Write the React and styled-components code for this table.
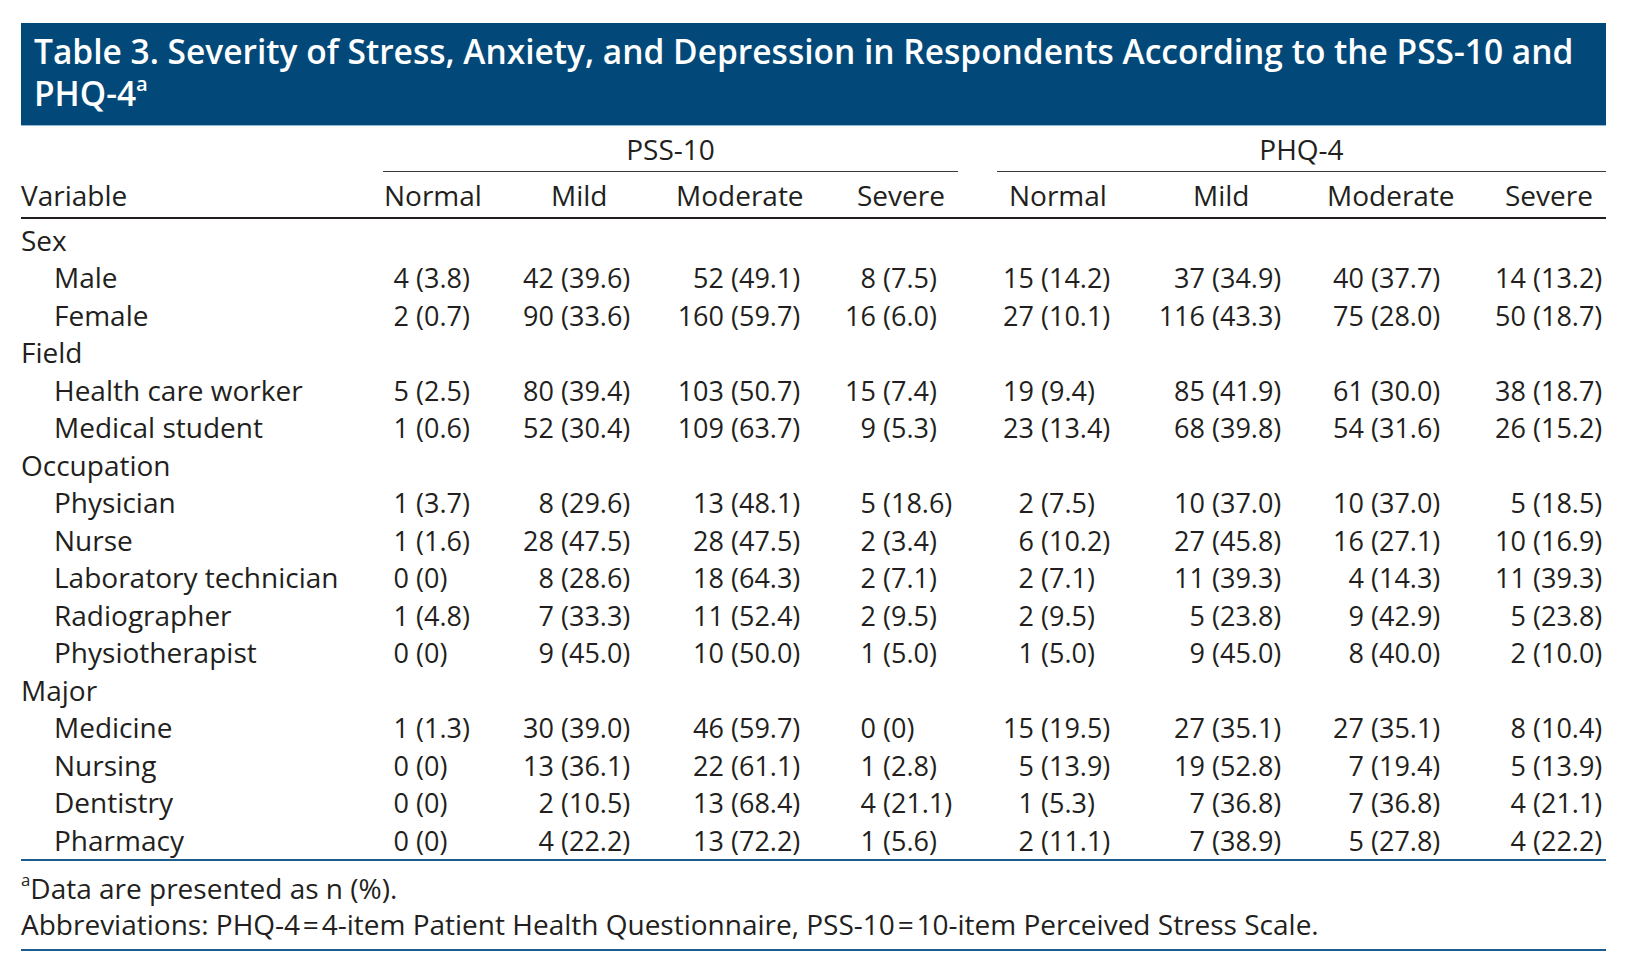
import React from "react";
import styled, { createGlobalStyle } from "styled-components";

const GlobalStyle = createGlobalStyle`
  body {
    margin: 0;
    background: #ffffff;
    font-family: "Open Sans", "Noto Sans", sans-serif;
    color: #231f20;
  }
`;

// track widths: variable | PSS x4 | spacer | PHQ x4
const COLS = "362px 107px 155px 165px 148px 39px 153px 150px 160px 146px";

const columns = [
  { name: "Normal", head: 1, nBox: 26 },
  { name: "Mild", head: 61, nBox: 64 },
  { name: "Moderate", head: 31, nBox: 79 },
  { name: "Severe", head: 47, nBox: 66 },
  { name: "Normal", head: 12, nBox: 37 },
  { name: "Mild", head: 43, nBox: 55 },
  { name: "Moderate", head: 27, nBox: 64 },
  { name: "Severe", head: 45, nBox: 66 },
];

const groups = [
  {
    label: "Sex",
    rows: [
      ["Male", "4 (3.8)", "42 (39.6)", "52 (49.1)", "8 (7.5)", "15 (14.2)", "37 (34.9)", "40 (37.7)", "14 (13.2)"],
      ["Female", "2 (0.7)", "90 (33.6)", "160 (59.7)", "16 (6.0)", "27 (10.1)", "116 (43.3)", "75 (28.0)", "50 (18.7)"],
    ],
  },
  {
    label: "Field",
    rows: [
      ["Health care worker", "5 (2.5)", "80 (39.4)", "103 (50.7)", "15 (7.4)", "19 (9.4)", "85 (41.9)", "61 (30.0)", "38 (18.7)"],
      ["Medical student", "1 (0.6)", "52 (30.4)", "109 (63.7)", "9 (5.3)", "23 (13.4)", "68 (39.8)", "54 (31.6)", "26 (15.2)"],
    ],
  },
  {
    label: "Occupation",
    rows: [
      ["Physician", "1 (3.7)", "8 (29.6)", "13 (48.1)", "5 (18.6)", "2 (7.5)", "10 (37.0)", "10 (37.0)", "5 (18.5)"],
      ["Nurse", "1 (1.6)", "28 (47.5)", "28 (47.5)", "2 (3.4)", "6 (10.2)", "27 (45.8)", "16 (27.1)", "10 (16.9)"],
      ["Laboratory technician", "0 (0)", "8 (28.6)", "18 (64.3)", "2 (7.1)", "2 (7.1)", "11 (39.3)", "4 (14.3)", "11 (39.3)"],
      ["Radiographer", "1 (4.8)", "7 (33.3)", "11 (52.4)", "2 (9.5)", "2 (9.5)", "5 (23.8)", "9 (42.9)", "5 (23.8)"],
      ["Physiotherapist", "0 (0)", "9 (45.0)", "10 (50.0)", "1 (5.0)", "1 (5.0)", "9 (45.0)", "8 (40.0)", "2 (10.0)"],
    ],
  },
  {
    label: "Major",
    rows: [
      ["Medicine", "1 (1.3)", "30 (39.0)", "46 (59.7)", "0 (0)", "15 (19.5)", "27 (35.1)", "27 (35.1)", "8 (10.4)"],
      ["Nursing", "0 (0)", "13 (36.1)", "22 (61.1)", "1 (2.8)", "5 (13.9)", "19 (52.8)", "7 (19.4)", "5 (13.9)"],
      ["Dentistry", "0 (0)", "2 (10.5)", "13 (68.4)", "4 (21.1)", "1 (5.3)", "7 (36.8)", "7 (36.8)", "4 (21.1)"],
      ["Pharmacy", "0 (0)", "4 (22.2)", "13 (72.2)", "1 (5.6)", "2 (11.1)", "7 (38.9)", "5 (27.8)", "4 (22.2)"],
    ],
  },
];

const Page = styled.div`
  width: 1585px;
  padding: 23px 0 0 21px;
  font-size: 28px;
`;

const TitleBar = styled.div`
  background: #02497a;
  border-bottom: 1px solid #8fb8d6;
  color: #ffffff;
  font-weight: 600;
  font-size: 33.5px;
  line-height: 41.5px;
  white-space: nowrap;
  padding: 8px 12px 11px 13px;
`;

const Sup = styled.sup`
  font-size: 0.6em;
  line-height: 0;
  vertical-align: 0.75em;
`;

const Grid = styled.div`
  display: grid;
  grid-template-columns: ${COLS};
  line-height: 36px;
`;

const GroupHead = styled(Grid)`
  padding-top: 5px;
`;

const GroupLabel = styled.div`
  grid-column: ${(p) => p.$span};
  text-align: center;
  padding-bottom: 4px;
  border-bottom: 1.5px solid #3a3a3a;
`;

const HeadRow = styled(Grid)`
  padding: 4.5px 0 4px;
  border-bottom: 2px solid #231f20;
`;

const HeadCell = styled.div`
  padding-left: ${(p) => p.$pad}px;
  white-space: nowrap;
`;

const Body = styled.div`
  padding-top: 3px;
  border-bottom: 2px solid #1d5c8c;
`;

const Row = styled(Grid)`
  height: 37.5px;
  line-height: 37.5px;
`;

const Label = styled.div`
  padding-left: ${(p) => (p.$indent ? 33 : 0)}px;
  white-space: nowrap;
`;

const Value = styled.div`
  display: flex;
  white-space: nowrap;
  font-size: 27px;
`;

const Count = styled.span`
  width: ${(p) => p.$w}px;
  text-align: right;
  flex: none;
`;

const Pct = styled.span`
  padding-left: 7px;
`;

const Notes = styled.div`
  padding-top: 9px;
  padding-bottom: 7px;
  line-height: 36px;
  border-bottom: 2px solid #1d5c8c;
`;

const Spacer = () => <div />;

function Cell({ text, w }) {
  const [n, pct] = text.split(" ");
  return (
    <Value>
      <Count $w={w}>{n}</Count>
      <Pct>{pct}</Pct>
    </Value>
  );
}

function DataRow({ row }) {
  const [label, ...vals] = row;
  return (
    <Row>
      <Label $indent>{label}</Label>
      {vals.slice(0, 4).map((v, i) => (
        <Cell key={i} text={v} w={columns[i].nBox} />
      ))}
      <Spacer />
      {vals.slice(4).map((v, i) => (
        <Cell key={i} text={v} w={columns[i + 4].nBox} />
      ))}
    </Row>
  );
}

export default function App() {
  return (
    <Page>
      <GlobalStyle />
      <TitleBar>
        Table 3. Severity of Stress, Anxiety, and Depression in Respondents According to the PSS-10 and
        <br />
        PHQ-4<Sup>a</Sup>
      </TitleBar>

      <GroupHead>
        <GroupLabel $span="2 / 6">PSS-10</GroupLabel>
        <GroupLabel $span="7 / 11">PHQ-4</GroupLabel>
      </GroupHead>

      <HeadRow>
        <HeadCell $pad={0}>Variable</HeadCell>
        {columns.slice(0, 4).map((c, i) => (
          <HeadCell key={i} $pad={c.head}>{c.name}</HeadCell>
        ))}
        <Spacer />
        {columns.slice(4).map((c, i) => (
          <HeadCell key={i} $pad={c.head}>{c.name}</HeadCell>
        ))}
      </HeadRow>

      <Body>
        {groups.map((g) => (
          <React.Fragment key={g.label}>
            <Row>
              <Label>{g.label}</Label>
            </Row>
            {g.rows.map((r) => (
              <DataRow key={r[0]} row={r} />
            ))}
          </React.Fragment>
        ))}
      </Body>

      <Notes>
        <div>
          <Sup>a</Sup>Data are presented as n (%).
        </div>
        <div>
          Abbreviations: PHQ-4&#8202;=&#8202;4-item Patient Health Questionnaire, PSS-10&#8202;=&#8202;10-item Perceived Stress Scale.
        </div>
      </Notes>
    </Page>
  );
}
